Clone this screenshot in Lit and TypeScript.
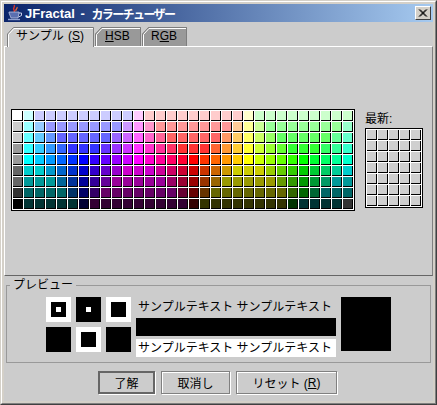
import { LitElement, html, css, svg } from "lit";
import { customElement } from "lit/decorators.js";

// Each colour is three base-6 digits (×51 per channel).
const SWATCHES: string[] = [
  "555 455 445 445 445 445 445 445 445 445 445 545 544 544 544 544 544 544 544 544 544 554 454 454 454 454 454 454 454 454 454",
  "444 355 345 335 335 335 335 335 335 335 435 535 534 533 533 533 533 533 533 533 543 553 453 353 353 353 353 353 353 353 354",
  "444 255 245 235 225 225 225 225 225 325 425 525 524 523 522 522 522 522 522 532 542 552 452 352 252 252 252 252 252 253 254",
  "333 155 145 135 125 115 115 115 215 315 415 515 514 513 512 511 511 511 521 531 541 551 451 351 251 151 151 151 152 153 154",
  "333 055 045 035 025 015 005 105 205 305 405 505 504 503 502 501 500 510 520 530 540 550 450 350 250 150 050 051 052 053 054",
  "222 044 044 034 024 014 004 104 204 304 404 404 404 403 402 401 400 410 420 430 440 440 440 340 240 140 040 041 042 043 044",
  "222 033 033 033 023 013 003 103 203 303 303 303 303 303 302 301 300 310 320 330 330 330 330 330 230 130 030 031 032 033 033",
  "111 022 022 022 022 012 002 102 202 202 202 202 202 202 202 201 200 210 220 220 220 220 220 220 220 120 020 021 022 022 022",
  "000 011 011 011 011 011 001 101 101 101 101 101 101 101 101 101 100 110 110 110 110 110 110 110 110 010 011 011 011 011 111",
];

const toRgb = (code: string) => {
  const [r, g, b] = code.split("").map((d) => Number(d) * 51);
  return `rgb(${r},${g},${b})`;
};

const TAB_H = 20;

function tabShape(w: number, selected: boolean) {
  const h = selected ? TAB_H : TAB_H - 1;
  const outer = `M0.5 ${h} V7 L6.5 0.5 H${w - 1.5} V${h}`;
  const inner = `M1.5 ${h} V7.5 L7 1.5 H${w - 2}`;
  const fill = `M0 ${h} V7 L6.5 0 H${w - 1} V${h} Z`;
  return svg`<path d=${fill} fill=${selected ? "#cccccc" : "#999999"}></path>
    <path d=${outer} fill="none" stroke="#7d7d7d"></path>
    <path d=${inner} fill="none" stroke="#ffffff"></path>`;
}

@customElement("app-root")
export class AppRoot extends LitElement {
  static styles = css`
    :host {
      display: block;
      width: 437px;
      height: 405px;
      font-family: "Liberation Sans", "Noto Sans CJK JP", sans-serif;
      font-size: 12px;
      color: #000;
    }
    .frame {
      box-sizing: border-box;
      width: 437px;
      height: 405px;
      background: #d4d0c8;
      border: 1px solid;
      border-color: #d4d0c8 #404040 #404040 #d4d0c8;
    }
    .frame-inner {
      box-sizing: border-box;
      height: 100%;
      padding: 2px;
      border: 1px solid;
      border-color: #fff #808080 #808080 #fff;
      display: flex;
      flex-direction: column;
    }
    .titlebar {
      flex: none;
      height: 18px;
      background: linear-gradient(90deg, #0a246a, #a6caf0);
      display: flex;
      align-items: center;
      padding: 0 2px;
      color: #fff;
      font-weight: bold;
    }
    .app-icon {
      flex: none;
      width: 18px;
      height: 18px;
      margin-right: 1px;
    }
    .title-latin {
      white-space: pre;
      font-size: 13px;
      word-spacing: 2px;
    }
    .title-kana {
      font-size: 12px;
      letter-spacing: -1.6px;
      margin-left: 1px;
    }
    .close {
      margin-left: auto;
      flex: none;
      box-sizing: border-box;
      width: 16px;
      height: 14px;
      background: #d4d0c8;
      border: 1px solid;
      border-color: #fff #404040 #404040 #fff;
      display: flex;
      align-items: center;
      justify-content: center;
    }
    .client {
      flex: 1;
      background: #cccccc;
      display: flex;
      flex-direction: column;
      min-height: 0;
    }
    .tabs {
      flex: none;
      display: flex;
      padding: 5px 0 0 3px;
      height: 19px;
      position: relative;
      z-index: 1;
    }
    .tab {
      position: relative;
      height: 19px;
      line-height: 19px;
      white-space: nowrap;
      box-sizing: border-box;
      word-spacing: 1px;
    }
    .tab.sel {
      height: 20px;
    }
    .tab svg {
      position: absolute;
      left: 0;
      top: 0;
    }
    .tab span.label {
      position: relative;
    }
    u {
      text-underline-offset: 1px;
    }
    .panel {
      flex: none;
      box-sizing: border-box;
      height: 230px;
      border: 1px solid;
      border-color: #fff #808080 #666666 #fff;
      padding: 62px 0 0 6px;
      display: flex;
      gap: 10px;
      align-items: flex-start;
    }
    .grid {
      flex: none;
      display: grid;
      gap: 1px;
      background: #fff;
      border: 1px solid #000;
      padding: 1px 0 0 1px;
      grid-auto-rows: 10px;
    }
    .cell {
      width: 10px;
      height: 10px;
      box-sizing: border-box;
      border-right: 1px solid #000;
      border-bottom: 1px solid #000;
    }
    .main-grid {
      grid-template-columns: repeat(31, 10px);
      padding-bottom: 1px;
      padding-right: 1px;
    }
    .recent-grid {
      grid-template-columns: repeat(5, 10px);
      padding-bottom: 1px;
      padding-right: 1px;
    }
    .recent-cell {
      background: #cfcfcf;
    }
    .recent {
      flex: none;
      padding-top: 4px;
    }
    .recent-label {
      height: 15px;
      line-height: 13px;
    }
    .preview {
      flex: none;
      padding: 2px 2px 0;
    }
    fieldset {
      margin: 0;
      border: 1px solid #999999;
      padding: 5px 0;
      min-width: 0;
    }
    legend {
      margin-left: 3px;
      padding: 0 3px;
      height: 14px;
      line-height: 14px;
      font-size: 12px;
    }
    .preview-row {
      display: flex;
      align-items: flex-start;
      gap: 5px;
      padding-left: 39px;
    }
    .squares {
      display: grid;
      grid-template-columns: repeat(3, 25px);
      grid-auto-rows: 25px;
      gap: 5px;
    }
    .sq {
      display: flex;
      align-items: center;
      justify-content: center;
      background: #000;
    }
    .sq.white {
      background: #fff;
    }
    .sq-mid {
      width: 15px;
      height: 15px;
      background: #000;
      display: flex;
      align-items: center;
      justify-content: center;
    }
    .sq-dot {
      width: 5px;
      height: 5px;
      background: #fff;
    }
    .sample {
      width: 200px;
      display: flex;
      flex-direction: column;
    }
    .sample-line {
      white-space: nowrap;
      padding-left: 2px;
      overflow: hidden;
    }
    .s1 {
      height: 21px;
      line-height: 21px;
    }
    .s2 {
      height: 18px;
      background: #000;
    }
    .s3 {
      height: 18px;
      line-height: 18px;
      background: #fff;
      margin-top: 3px;
    }
    .big {
      width: 50px;
      height: 54px;
      background: #000;
    }
    .buttons {
      flex: none;
      display: flex;
      gap: 5px;
      padding: 8px 0 0 94px;
    }
    .btn {
      box-sizing: border-box;
      height: 23px;
      background: #cccccc;
      border: 1px solid #808080;
      box-shadow: inset 1px 1px 0 #fff, 1px 1px 0 #fff;
      display: flex;
      align-items: center;
      justify-content: center;
      white-space: nowrap;
    }
    .btn.default {
      border: 2px solid #666666;
      box-shadow: 1px 1px 0 #fff;
    }
    .w1 { width: 57px; margin-right: 1px; }
    .w2 { width: 69px; margin-right: 1px; }
    .w3 { width: 101px; }
  `;

  private tab(label: unknown, w: number, pad: number, selected = false) {
    const h = selected ? TAB_H : TAB_H - 1;
    return html`<div class="tab ${selected ? "sel" : ""}" style="width:${w}px;padding-left:${pad}px">
      <svg width=${w} height=${h} viewBox="0 0 ${w} ${h}">${tabShape(w, selected)}</svg>
      <span class="label">${label}</span>
    </div>`;
  }

  private square(kind: string) {
    const white = kind === "ring" || kind === "ringdot";
    const dot = kind === "dot" || kind === "ringdot";
    return html`<div class="sq ${white ? "white" : ""}">
      ${kind === "solid"
        ? ""
        : html`<div class="sq-mid">${dot ? html`<div class="sq-dot"></div>` : ""}</div>`}
    </div>`;
  }

  render() {
    const sampleText = "サンプルテキスト サンプルテキスト";
    return html`<div class="frame"><div class="frame-inner">
      <div class="titlebar">
        <svg class="app-icon" viewBox="0 0 18 18">
          <path d="M8 1c2 2-2 3 0 5 1 1 0 2 0 2" fill="none" stroke="#d8342a" stroke-width="1.4"></path>
          <path d="M11 3c1 2-2 2-1 4" fill="none" stroke="#e8703a" stroke-width="1.2"></path>
          <path d="M3 8h10v1l-1 5H5L3 9z" fill="#5a6fb0" stroke="#c8d0ea" stroke-width=".7"></path>
          <path d="M13 9h2.500v2.500L12.500 13" fill="none" stroke="#c8d0ea" stroke-width="1"></path>
          <path d="M2 15.500h12" stroke="#8fa0d0" stroke-width="1.400"></path>
        </svg>
        <span class="title-latin">JFractal - </span><span class="title-kana">カラーチューザー</span>
        <div class="close">
          <svg width="10" height="10" viewBox="0 0 10 10">
            <path d="M1 1.500l7 7M2 1.500l7 7M8 1.500l-7 7M9 1.500l-7 7" stroke="#000" fill="none"></path>
          </svg>
        </div>
      </div>
      <div class="client">
        <div class="tabs">
          ${this.tab(html`サンプル (<u>S</u>)`, 88, 9, true)}
          ${this.tab(html`<u>H</u>SB`, 47, 10)}
          ${this.tab(html`R<u>G</u>B`, 46, 9)}
        </div>
        <div class="panel">
          <div class="grid main-grid">
            ${SWATCHES.map((row) =>
              row.split(" ").map((c) => html`<div class="cell" style="background:${toRgb(c)}"></div>`)
            )}
          </div>
          <div class="recent">
            <div class="recent-label">最新:</div>
            <div class="grid recent-grid">
              ${Array.from({ length: 35 }, () => html`<div class="cell recent-cell"></div>`)}
            </div>
          </div>
        </div>
        <div class="preview">
          <fieldset>
            <legend>プレビュー</legend>
            <div class="preview-row">
              <div class="squares">
                ${["ringdot", "dot", "ring", "solid", "ring", "solid"].map((k) => this.square(k))}
              </div>
              <div class="sample">
                <div class="sample-line s1">${sampleText}</div>
                <div class="s2"></div>
                <div class="sample-line s3">${sampleText}</div>
              </div>
              <div class="big"></div>
            </div>
          </fieldset>
        </div>
        <div class="buttons">
          <div class="btn default w1">了解</div>
          <div class="btn w2">取消し</div>
          <div class="btn w3">リセット (<u>R</u>)</div>
        </div>
      </div>
    </div></div>`;
  }
}
